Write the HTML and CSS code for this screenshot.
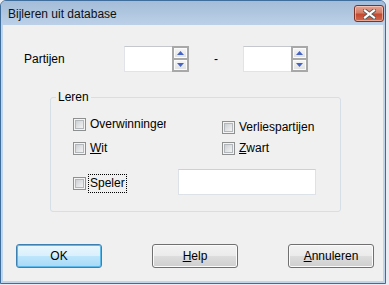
FILE: index.html
```html
<!DOCTYPE html>
<html lang="nl">
<head>
<meta charset="utf-8">
<title>Bijleren uit database</title>
<link rel="stylesheet" href="styles.css">
</head>
<body>
<div class="window">
  <div class="titlebar">
    <span class="title">Bijleren uit database</span>
    <button class="close" aria-label="Sluiten">
      <svg width="13" height="10" viewBox="0 0 13 10">
        <path d="M2 1.5 L11 8.5 M11 1.5 L2 8.5" stroke="#5a5a5a" stroke-width="4" stroke-linecap="square" fill="none"/>
        <path d="M2 1.5 L11 8.5 M11 1.5 L2 8.5" stroke="#ffffff" stroke-width="2.2" stroke-linecap="square" fill="none"/>
      </svg>
    </button>
  </div>
  <div class="client">
    <div class="range-row">
      <span class="range-label">Partijen</span>
      <div class="spin">
        <div class="spin-input"></div>
        <div class="spin-btns">
          <span class="spin-btn"><svg width="7" height="4" viewBox="0 0 7 4"><path d="M3.5 0 L7 4 L0 4 Z" fill="#4563c4"/></svg></span>
          <span class="spin-btn"><svg width="7" height="4" viewBox="0 0 7 4"><path d="M0 0 L7 0 L3.5 4 Z" fill="#4563c4"/></svg></span>
        </div>
      </div>
      <span class="dash">-</span>
      <div class="spin">
        <div class="spin-input"></div>
        <div class="spin-btns">
          <span class="spin-btn"><svg width="7" height="4" viewBox="0 0 7 4"><path d="M3.5 0 L7 4 L0 4 Z" fill="#4563c4"/></svg></span>
          <span class="spin-btn"><svg width="7" height="4" viewBox="0 0 7 4"><path d="M0 0 L7 0 L3.5 4 Z" fill="#4563c4"/></svg></span>
        </div>
      </div>
    </div>

    <fieldset class="group">
      <legend class="group-title">Leren</legend>
      <div class="cb-row row1">
        <label class="check col1"><span class="box"></span><span class="txt clip">Overwinningen</span></label>
        <label class="check col2 shift"><span class="box"></span><span class="txt">Verliespartijen</span></label>
      </div>
      <div class="cb-row row2">
        <label class="check col1"><span class="box"></span><span class="txt"><u>W</u>it</span></label>
        <label class="check col2"><span class="box"></span><span class="txt"><u>Z</u>wart</span></label>
      </div>
      <div class="cb-row row3">
        <label class="check col-speler"><span class="box"></span><span class="txt focus">Speler</span></label>
        <div class="textbox"></div>
      </div>
    </fieldset>

    <div class="buttons">
      <button class="btn default">OK</button>
      <button class="btn"><u>H</u>elp</button>
      <button class="btn"><u>A</u>nnuleren</button>
    </div>
  </div>
</div>
</body>
</html>
```

FILE: styles.css
```css
html, body {
  margin: 0;
  padding: 0;
}
body {
  width: 389px;
  height: 285px;
  overflow: hidden;
  background: #e9ecf3;
  font-family: "Liberation Sans", Arial, sans-serif;
  font-size: 12px;
  color: #000;
}
.window {
  width: 386px;
  height: 284px;
  box-sizing: border-box;
  border: 1px solid #3f6d9c;
  border-radius: 6px 6px 0 0;
  background: #c0d5ec;
  padding: 0 2px 2px 2px;
  display: flex;
  flex-direction: column;
}
.titlebar {
  height: 24px;
  margin: 0 -2px;
  border-radius: 5px 5px 0 0;
  background: linear-gradient(#a4bcd8, #bcd1e8);
  display: flex;
  justify-content: space-between;
  align-items: flex-start;
}
.title {
  margin-left: 7px;
  margin-top: 6px;
  line-height: 14px;
  color: #101010;
}
.close {
  width: 30px;
  height: 17px;
  margin: 4px 1px 0 0;
  padding: 0;
  box-sizing: border-box;
  border: 1px solid #7b3328;
  border-radius: 3px;
  background: linear-gradient(#e3a494 0%, #d57e68 45%, #c3492f 55%, #cf6a50 100%);
  box-shadow: inset 0 0 0 1px rgba(255, 220, 210, 0.55);
  display: flex;
  align-items: center;
  justify-content: center;
}
.client {
  flex: 1;
  background: #f0f0f0;
  display: flex;
  flex-direction: column;
}
.range-row {
  display: flex;
  align-items: center;
  padding: 21px 0 0 21px;
  height: 26px;
}
.range-label {
  width: 100px;
}
.spin {
  display: flex;
  width: 65px;
  height: 26px;
}
.spin-input {
  flex: 1;
  box-sizing: border-box;
  background: #fff;
  border: 1px solid #e2e3ea;
  border-top-color: #c4c7cd;
  border-right: none;
}
.spin-btns {
  width: 17px;
  box-sizing: border-box;
  background: #a8a8a8;
  padding: 2px;
  display: flex;
  flex-direction: column;
  gap: 2px;
}
.spin-btn {
  flex: 1;
  background: linear-gradient(#f6f6f6, #e0e0e0);
  box-shadow: inset 0 0 0 1px #fbfbfb;
  display: flex;
  align-items: center;
  justify-content: center;
}
.dash {
  width: 54px;
  text-align: center;
}
.group {
  margin: 18px 0 0 47px;
  width: 291px;
  height: 122px;
  box-sizing: border-box;
  border: 1px solid #d5dfe5;
  border-radius: 3px;
  padding: 0 0 0 5px;
  min-width: 0;
}
.group-title {
  padding: 0 2px;
  line-height: 15px;
}
.cb-row {
  display: flex;
  align-items: center;
  margin-left: 17px;
}
.row1 {
  height: 15px;
  margin-top: 12px;
  align-items: flex-start;
}
.row2 {
  height: 15px;
  margin-top: 9px;
}
.row3 {
  height: 26px;
  margin-top: 13px;
}
.check {
  display: flex;
  align-items: center;
  line-height: 15px;
}
.col1 {
  width: 149px;
}
.col-speler {
  width: 105px;
  margin-top: 3px;
}
.shift {
  margin-top: 3px;
}
.box {
  width: 13px;
  height: 13px;
  box-sizing: border-box;
  border: 1px solid #8e8f8f;
  padding: 1px;
  background: #f4f4f4;
  margin-right: 4px;
  flex: none;
}
.box::before {
  content: "";
  display: block;
  width: 9px;
  height: 9px;
  box-sizing: border-box;
  border: 1px solid #b3b6ba;
  background: linear-gradient(135deg, #cdd0d4, #f3f3f3);
}
.clip {
  max-width: 76px;
  overflow: hidden;
  white-space: nowrap;
}
.focus {
  margin-left: -2px;
  padding: 1px 1px;
  border: 1px dotted #000;
}
.textbox {
  width: 138px;
  height: 26px;
  box-sizing: border-box;
  background: #fff;
  border: 1px solid #dde2e8;
  border-top-color: #cdd1d7;
}
.buttons {
  margin-top: auto;
  display: flex;
  justify-content: space-between;
  padding: 0 9px 13px 13px;
}
.btn {
  width: 86px;
  height: 24px;
  padding: 0;
  box-sizing: border-box;
  border: 1px solid #707070;
  border-radius: 3px;
  background: linear-gradient(#f2f2f2 0%, #ebebeb 50%, #dddddd 50%, #cfcfcf 100%);
  box-shadow: inset 0 0 0 1px #fbfbfb;
  font-family: "Liberation Sans", Arial, sans-serif;
  font-size: 12px;
  color: #000;
}
.btn.default {
  border-color: #3c7fb1;
  background: linear-gradient(#eaf6fd 0%, #d9f0fc 50%, #bee6fd 50%, #a7d9f5 100%);
  box-shadow: inset 0 0 0 1px #5cb8e8;
}
```
